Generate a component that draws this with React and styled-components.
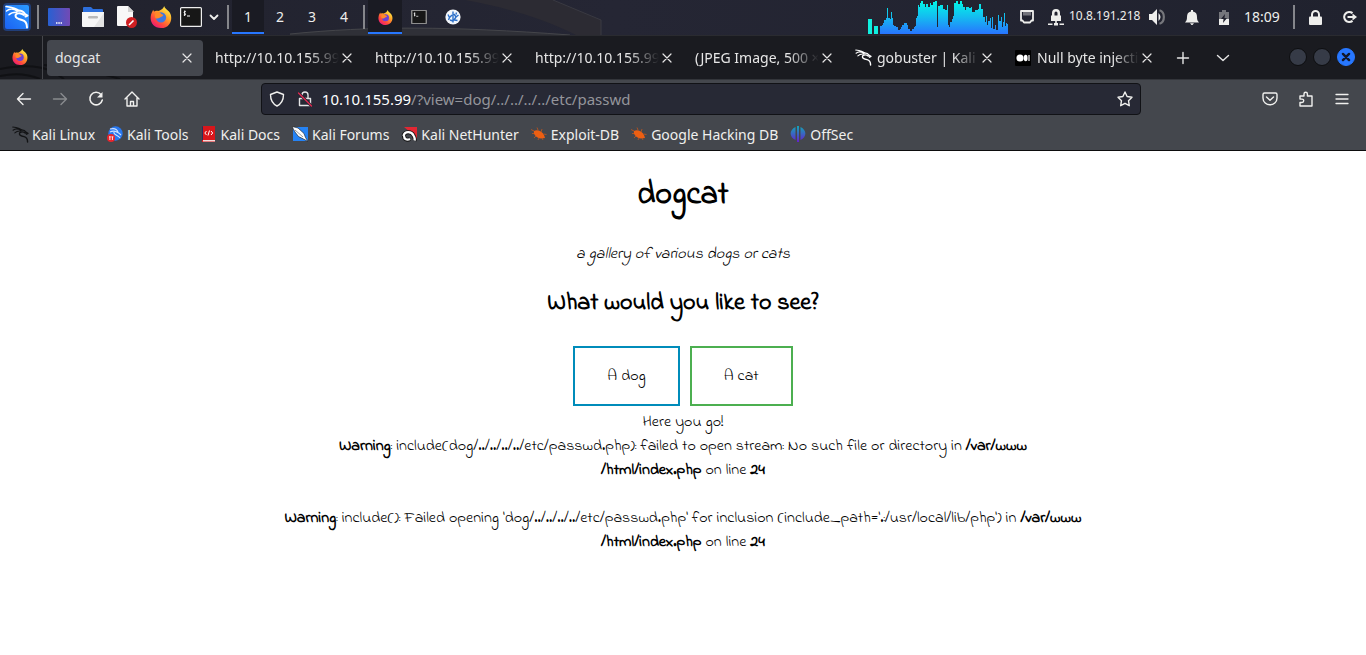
import React from "react";
import styled, { createGlobalStyle } from "styled-components";

const Global = createGlobalStyle`
  * { box-sizing: border-box; }
  body { margin: 0; background: #fff; font-family: "Noto Sans", sans-serif; }
  button { font: inherit; color: inherit; background: none; border: 0; padding: 0; margin: 0; }
  a { color: inherit; text-decoration: none; }
  svg { display: block; flex: none; }
`;

/* ---------- desktop panel ---------- */

const Panel = styled.header`
  position: relative;
  z-index: 0;
  display: flex;
  align-items: flex-start;
  height: 35px;
  background: linear-gradient(90deg, #21222d, #252634 45%, #20222e);
  color: #eeeeec;
  overflow: hidden;
`;
const Wallpaper = styled.svg`
  position: absolute;
  top: 0;
  left: 0;
  z-index: -1;
`;
const PanelButton = styled.button`
  flex: none;
  width: ${(p) => p.$w || 34}px;
  height: 34px;
  padding-top: 2px;
  display: flex;
  align-items: center;
  justify-content: center;
  font-size: 14px;
  line-height: 18px;
  background: ${(p) => (p.$active ? "#1a1b23" : "transparent")};
  border-bottom: 2px solid ${(p) => (p.$active ? "#2777ff" : "transparent")};
`;
const PanelRule = styled.span`
  flex: none;
  width: 2px;
  height: 24px;
  margin: 5px 3px 0;
  background: #85868b;
`;
const PanelSpace = styled.span`
  flex: 1;
`;
const Address = styled.span`
  width: 74px;
  padding-left: 2px;
  font-size: 12px;
  line-height: 32px;
  white-space: nowrap;
`;
const Clock = styled.time`
  width: 51px;
  padding-left: 5px;
  font-size: 14px;
  line-height: 33px;
`;

/* ---------- browser chrome ---------- */

const TabBar = styled.div`
  position: relative;
  z-index: 0;
  display: flex;
  align-items: center;
  height: 44px;
  background: #1a1b20;
  border-top: 1px solid #2a2b30;
  color: #e6e6e6;
  font-size: 14px;
`;
const BrowserMark = styled.span`
  flex: none;
  width: 43px;
  height: 43px;
  margin-right: 4px;
  padding: 0 0 2px 12px;
  display: flex;
  align-items: center;
  border-right: 1px solid #46474c;
`;
const Tabs = styled.div`
  display: flex;
  flex: 0 1 1116px;
  gap: 4px;
  min-width: 0;
`;
const Tab = styled.div`
  flex: 0 1 156px;
  min-width: 0;
  height: 36px;
  padding: 0 8px;
  display: flex;
  align-items: center;
  border-radius: 4px;
  background: ${(p) => (p.$active ? "#44474e" : "transparent")};
`;
const TabIcon = styled.span`
  flex: none;
  width: 22px;
`;
const TabLabel = styled.span`
  flex: 1;
  min-width: 0;
  overflow: hidden;
  white-space: nowrap;
  mask-image: ${(p) => (p.$fade ? "linear-gradient(90deg, #000 75%, transparent)" : "none")};
`;
const CloseTab = styled.button`
  flex: none;
  width: 16px;
  height: 16px;
  display: grid;
  place-items: center;
`;
const BarButton = styled.button`
  flex: none;
  width: 40px;
  height: 36px;
  display: grid;
  place-items: center;
`;
const WindowButtons = styled.div`
  display: flex;
  gap: 6px;
  margin-left: auto;
  padding: 0 11px 2px 0;
`;
const WindowButton = styled.button`
  width: 18px;
  height: 18px;
  border-radius: 50%;
  display: grid;
  place-items: center;
  border: 1px solid ${(p) => (p.$close ? "#2777ff" : "#0d0e10")};
  background: ${(p) => (p.$close ? "#2777ff" : "#363b47")};
`;
const Toolbar = styled.nav`
  background: #44474d;
  border-top: 1px solid #33353a;
  border-bottom: 1px solid #0c0c0d;
  color: #f0f0ee;
  font-size: 14px;
`;
const NavRow = styled.div`
  display: flex;
  align-items: center;
  height: 38px;
  padding: 0 6px;
`;
const NavButton = styled.button`
  flex: none;
  width: 36px;
  height: 32px;
  display: grid;
  place-items: center;
  opacity: ${(p) => (p.disabled ? 0.4 : 1)};
`;
const NavSpace = styled.span`
  flex: 10;
`;
const UrlBar = styled.form`
  flex: 78;
  min-width: 0;
  height: 32px;
  padding: 0 7px;
  display: flex;
  align-items: center;
  background: #272935;
  border: 1px solid #111216;
  border-radius: 4px;
  font-size: 15px;
  line-height: 20px;
`;
const UrlMarks = styled.span`
  flex: none;
  display: flex;
  gap: 12px;
  margin-right: 9px;
`;
const UrlHost = styled.label`
  color: #fff;
`;
const UrlPath = styled.input`
  flex: 1;
  min-width: 0;
  height: 20px;
  padding: 0;
  border: 0;
  outline: 0;
  background: none;
  color: #94959b;
  font: inherit;
`;
const Bookmarks = styled.div`
  display: flex;
  align-items: center;
  height: 32px;
  padding: 0 12px;
  gap: 12px;
`;
const Bookmark = styled.a`
  display: flex;
  align-items: center;
  gap: 4px;
  white-space: nowrap;
`;
const BookmarkIcon = styled.span`
  width: 16px;
  display: grid;
  place-items: center;
`;

/* ---------- page ---------- */

const Page = styled.main`
  padding: 21px 16px;
  color: #000;
  text-align: center;
  font-family: "Indie Flower", "Indie Flower Regular", cursive;
  font-size: 16px;
  line-height: 24px;
  font-kerning: none;
  font-variant-ligatures: none;
`;
const Title = styled.h1`
  margin: 0;
  font-size: 32px;
  line-height: 48px;
  font-weight: 700;
`;
const Tagline = styled.p`
  margin: 22px 0;
  font-style: italic;
`;
const Question = styled.h2`
  margin: 0;
  font-size: 24px;
  line-height: 32px;
  font-weight: 700;
`;
const Choices = styled.div`
  display: flex;
  justify-content: center;
  gap: 10px;
  margin: 26px 0 4px;
`;
const Choice = styled.a`
  padding: 16px 32px;
  border: 2px solid ${(p) => p.$color};
`;
const Message = styled.p`
  margin: 0 0 ${(p) => (p.$spaced ? 24 : 0)}px;
`;

/* ---------- drawings ---------- */

const Line = ({ d, size = 16, w = 1.4, color = "currentColor" }) => (
  <svg width={size} height={size} viewBox="0 0 16 16" fill="none" stroke={color} strokeWidth={w} strokeLinecap="round" strokeLinejoin="round">
    <path d={d} />
  </svg>
);

const DragonStrokes = () => (
  <>
    <path d="M1 1.500c5 .5 10 1 13 4.500M1.500 6c3-2.500 7-2.500 11 0M4 9.800c2-2 5-2.800 8-2.600" strokeWidth="1.500" />
    <path d="M13 5.500c3-.2 5.500 1 7 3.500l2.500 1.500-2 1" strokeWidth="2" />
    <path d="M19 10c-4-2.800-8.500-1.800-8.500.8s3 3.400 6.500 4.200 5 3 5 7.500" strokeWidth="2" />
  </>
);

const Dragon = ({ color = "#fff" }) => (
  <svg width="17" height="17" viewBox="0 0 24 24" fill="none" stroke={color} strokeLinecap="round" strokeLinejoin="round">
    <DragonStrokes />
  </svg>
);

const KaliMenu = () => (
  <svg width="30" height="30" viewBox="0 0 30 30">
    <defs>
      <linearGradient id="kali" x1="0" y1="1" x2="1" y2="0">
        <stop offset="0" stopColor="#1b62f4" />
        <stop offset="1" stopColor="#2b9bff" />
      </linearGradient>
    </defs>
    <rect x="1" y="1" width="28" height="28" rx="4" fill="#2468e8" opacity=".4" />
    <rect x="3" y="3" width="24" height="24" rx="2" fill="url(#kali)" />
    <g transform="translate(3 3)" fill="none" stroke="#fff" strokeLinecap="round" strokeLinejoin="round">
      <DragonStrokes />
    </g>
  </svg>
);

const Firefox = ({ size }) => (
  <svg width={size} height={size} viewBox="0 0 24 24">
    <defs>
      <linearGradient id="fox" x1=".85" y1=".1" x2=".2" y2="1">
        <stop offset="0" stopColor="#fff04a" />
        <stop offset=".35" stopColor="#ffa226" />
        <stop offset=".7" stopColor="#ff4a3c" />
        <stop offset="1" stopColor="#e9127f" />
      </linearGradient>
    </defs>
    <path d="M15.500 0c.5 3 4 4 6 7 3.500 5 2 17-9.500 17C4 24 0 18 .8 11.500 1.100 8 2.500 6 3.500 4c.2 1 .5 1.600 1 2 1.500-1 3-.8 4.500-.5 2-1 5-1.500 6.500-5.500z" fill="url(#fox)" />
    <circle cx="12" cy="12.500" r="5.600" fill={size > 20 ? "#3f78e0" : "#6a42d6"} />
    <path d="M6.500 7.500c2-1.500 4-1 5.500 1 1 .8 2.500.8 2.500 1.500-1 1.800-3 1.500-4 2.800C8.500 14 6 14 5.500 12 5 10.500 5.500 9 6.500 7.500z" fill="#ff8a28" />
  </svg>
);

const Desktop = () => (
  <svg width="22" height="18" viewBox="0 0 22 18">
    <defs>
      <linearGradient id="desk">
        <stop offset="0" stopColor="#2860d2" />
        <stop offset="1" stopColor="#724ab5" />
      </linearGradient>
    </defs>
    <rect width="22" height="18" rx="1" fill="url(#desk)" />
    <path d="M8 15h6" stroke="#fff" strokeWidth="1.500" strokeDasharray="1.500 .8" />
  </svg>
);

const Folder = () => (
  <svg width="22" height="20" viewBox="0 0 22 20">
    <path d="M1 1q0-1 1-1h7l2 2h9q1 0 1 1v4H1z" fill="#2d6fdc" />
    <path d="M0 5h22v14q0 1-1 1H1q-1 0-1-1z" fill="#f6f6f6" />
    <path d="M22 6v13q0 1-1 1h-9z" fill="#e4e4e4" />
    <rect x="6" y="9" width="10" height="2.500" rx="1.200" fill="#b9b9b9" />
  </svg>
);

const Editor = () => (
  <svg width="20" height="22" viewBox="0 0 20 22">
    <path d="M0 1q0-1 1-1h10l5 5v15H1q-1 0-1-1z" fill="#f8f8f8" />
    <path d="M11 0l6 6h-6z" fill="#d2d2d2" />
    <circle cx="14.500" cy="16.500" r="5.500" fill="#cf1f22" />
    <path d="M12 19l4.500-4.500" stroke="#fff" strokeWidth="1.600" />
  </svg>
);

const Terminal = ({ small }) => (
  <svg width={small ? 16 : 22} height={small ? 14 : 20} viewBox="0 0 22 20">
    <rect x=".6" y=".6" width="20.800" height="18.800" rx="1" fill="#171717" stroke={small ? "#8d8d8d" : "#eee"} strokeWidth={small ? 2 : 1.200} />
    <path d="M5.800 4.500C4 4 3.500 5.800 4.800 6.300s1 2.200-1 1.700M4.700 3.500v5.500M7 9h3" stroke="#fff" strokeWidth="1" fill="none" />
  </svg>
);

const Monitor = () => (
  <svg width="16" height="16" viewBox="0 0 16 16">
    <circle cx="8" cy="8" r="7.600" fill="#f2f6fb" />
    <path d="M3 5.500l1.500 3L7 6M4.500 8.500L3.500 11M8 2.500v11M9 5l2 3 2.500-2M11 8l-2 3 3.500.5M5 11l3 1M11.500 3.500l-.5 2" stroke="#2b6fc9" strokeWidth="1.400" fill="none" />
  </svg>
);

/* Each pair is a left edge and a bar top, on a scale of three units per pixel. */
const load = [
  [0,78],[6,76],[9,68],[12,60],[18,55],[21,24],[24,55],[30,58],[33,35],[36,55],[39,74],[42,78],[48,81],[54,90],[60,88],[63,80],[66,75],[72,70],[81,76],[84,86],[90,92],[96,88],[102,82],[106,77],[108,55],[111,48],[114,16],[117,20],[120,8],[123,4],[126,3],[129,12],[135,21],[138,13],[144,20],[150,10],[153,15],[159,6],[165,3],[171,81],[174,18],[180,15],[189,27],[195,30],[201,15],[204,75],[207,81],[210,66],[216,57],[219,48],[222,10],[228,3],[234,12],[240,3],[246,12],[249,22],[255,30],[258,22],[267,25],[273,20],[276,36],[285,30],[294,27],[297,12],[303,28],[309,50],[315,66],[318,48],[321,76],[324,64],[330,55],[333,84],[336,50],[339,88],[345,76],[348,90],[354,45],[357,63],[363,50],[366,82],[369,66],[372,39],[375,78],[378,69],[381,72],
];

const LoadGraph = () => (
  <svg width="142" height="34" viewBox="0 0 426 102">
    <defs>
      <linearGradient id="load" gradientUnits="userSpaceOnUse" x1="0" y1="0" x2="0" y2="102">
        <stop offset="0" stopColor="#00fae6" />
        <stop offset=".5" stopColor="#14bcf0" />
        <stop offset="1" stopColor="#2874ff" />
      </linearGradient>
    </defs>
    <path d="M0 57h12v45H0zM18 78h12v24H18z" fill="#0ff0df" />
    {load.map(([x, y], i) => {
      const end = i + 1 < load.length ? load[i + 1][0] : 384;
      return <rect key={x} x={36 + x} y={y} width={end - x} height={102 - y} fill="url(#load)" shapeRendering="crispEdges" />;
    })}
  </svg>
);

const Ethernet = () => (
  <svg width="14" height="14" viewBox="0 0 14 14" fill="none" stroke="#eeeeec">
    <path d="M1 1h12v9.500h-1.500l-1.500 2H4l-1.500-2H1z" strokeWidth="1.800" strokeLinejoin="round" />
    <path d="M4 2v3.500M6 2v3.500M8 2v3.500M10 2v3.500" strokeWidth="1" opacity=".8" />
  </svg>
);

const VpnLock = () => (
  <svg width="16" height="17" viewBox="0 0 16 17" fill="#eeeeec">
    <path fillRule="evenodd" d="M4 6.500V4a4 4 0 0 1 8 0v2.500h1V12H3V6.500zM6.500 6.500h3V4a1.500 1.500 0 0 0-3 0z" />
    <path d="M7.200 12h1.600v2H7.200zM0 14.500h4.500V16H0zM6 14h4v2.500H6zM11.500 14.500H16V16h-4.500z" />
  </svg>
);

const Volume = () => (
  <svg width="18" height="16" viewBox="0 0 18 16">
    <path d="M0 5h3l5-5v16l-5-5H0z" fill="#eeeeec" />
    <path d="M9.500 4q4 4 0 8z" fill="#eeeeec" />
    <path d="M10.500 1.200c5.800 1.500 5.800 12 0 13.600" stroke="#76777c" strokeWidth="2.200" fill="none" />
  </svg>
);

const Bell = () => (
  <svg width="14" height="15" viewBox="0 0 14 15" fill="#eeeeec">
    <path d="M6 0h2v1.500c3 .5 4 2.500 4 5.500 0 2.500.5 4 2 5.500H0C1.500 11 2 9.500 2 7c0-3 1-5 4-5.500zM5 13.200h4L7.500 15h-1z" />
  </svg>
);

const Battery = () => (
  <svg width="10" height="15" viewBox="0 0 10 15">
    <path d="M0 2h3V0h4v2h3v7H0z" fill="#75767b" />
    <path d="M0 9h10v6H0z" fill="#eeeeec" />
    <path d="M6 4L2 9h2.500L4 13l4-5H5.500z" fill="#22232e" />
  </svg>
);

const Padlock = () => (
  <svg width="13" height="15" viewBox="0 0 13 15">
    <path d="M3 8V4.500a3.500 3.500 0 0 1 7 0V8" fill="none" stroke="#eeeeec" strokeWidth="2" />
    <rect y="6.500" width="13" height="8.500" rx="1" fill="#eeeeec" />
  </svg>
);

const LogOut = () => (
  <svg width="15" height="14" viewBox="0 0 15 14" fill="none" stroke="#eeeeec">
    <path d="M10.500 3.200A5 5 0 1 0 10.500 10.800" strokeWidth="2.200" />
    <path d="M5.500 7H11" strokeWidth="2" />
    <path d="M10.500 3.500L15 7l-4.500 3.500z" fill="#eeeeec" stroke="none" />
  </svg>
);

const Medium = () => (
  <svg width="16" height="16" viewBox="0 0 16 16">
    <rect width="16" height="16" rx="1" fill="#000" />
    <circle cx="5" cy="8" r="3.600" fill="#fff" />
    <ellipse cx="10.700" cy="8" rx="1.900" ry="3.300" fill="#fff" />
    <path d="M14 5v6" stroke="#fff" strokeWidth="1.200" />
  </svg>
);

const Close = () => <Line d="M4 4l8 8M12 4l-8 8" w={1.2} />;

const Reload = () => (
  <svg width="16" height="16" viewBox="0 0 16 16" fill="none" stroke="currentColor" strokeWidth="1.500">
    <path d="M13 3.500A6.300 6.300 0 1 0 14.300 9" strokeLinecap="round" />
    <path d="M14.500 1v5.500H9z" fill="currentColor" stroke="none" />
  </svg>
);

const Insecure = () => (
  <svg width="16" height="16" viewBox="0 0 16 16" fill="none" strokeLinecap="round">
    <path d="M5 7V4a3 3 0 0 1 6 0v3M2.500 7.500h11v7h-11z" stroke="#e4e4e6" strokeWidth="1.400" strokeLinejoin="round" />
    <path d="M2 2.500l12.500 12.500" stroke="#272935" strokeWidth="3" />
    <path d="M1.500 2l13 13" stroke="#e22850" strokeWidth="1.300" />
  </svg>
);

const KaliTools = () => (
  <svg width="16" height="16" viewBox="0 0 16 16">
    <circle cx="8.500" cy="7.500" r="7.200" fill="#2777f0" />
    <path d="M3 3c4-1 7 0 8 3M3 6c4-2 8 0 11 3M7 6c-1 3 4 3 6 6" stroke="#cfe2ff" strokeWidth="1.100" fill="none" />
    <circle cx="4" cy="12" r="4" fill="#e8252c" />
    <path d="M2 10.800h1.800M2.900 11v3M4.500 10.800h1.800M5.400 11v3" stroke="#fff" strokeWidth=".9" />
  </svg>
);

const KaliDocs = () => (
  <svg width="13" height="16" viewBox="0 0 13 16">
    <path d="M0 1q0-1 1-1h12v16H0z" fill="#d8161b" />
    <path d="M0 1q0-1 1-1v14H0z" fill="#25305e" />
    <path d="M1 14h12v1.500H1z" fill="#f3dada" />
    <path d="M4.500 5L2.800 7l1.700 2M9 5l1.700 2L9 9M7.500 4.500l-1.500 5" stroke="#fff" strokeWidth="1" fill="none" />
  </svg>
);

const KaliForums = () => (
  <svg width="16" height="16" viewBox="0 0 16 16">
    <path d="M1 1h15v14H1z" fill="#2583f5" />
    <path d="M0 .5l6 1.500 6 5.500 1.500 4L16 15.500l-4.500-2.500-5-2.500L3 6z" fill="#fff" stroke="#161719" strokeWidth=".6" />
    <path d="M3 4l8 7" stroke="#333" strokeWidth=".5" />
  </svg>
);

const NetHunter = () => (
  <svg width="16" height="15" viewBox="0 0 16 15">
    <path d="M3 0h13v12L9 5z" fill="#e22733" />
    <path d="M2.500 9c1-5 8-5 10-.5 1.500 2.500 1.500 4 1 5M3 8.500c0 4 3 5 6 3.500" fill="none" stroke="#111" strokeWidth="4" />
    <path d="M2.500 9c1-5 8-5 10-.5 1.500 2.500 1.500 4 1 5M3 8.500c0 4 3 5 6 3.500" fill="none" stroke="#fff" strokeWidth="2.300" />
  </svg>
);

const Bug = () => (
  <svg width="16" height="14" viewBox="0 0 16 14">
    <path d="M3 4c3-2 8 0 10 4l1 3-4 .5C6 11 2 8 3 4z" fill="#ed5f12" />
    <path d="M3 4L0 2.500M3 6.500H1M5 9l-2 2M8 11l-1 2M7 3L6 .5M10 5l1-3M12.500 7l3 .5M11 11l1 2" stroke="#b9541f" strokeWidth=".9" />
  </svg>
);

const OffSec = () => (
  <svg width="16" height="16" viewBox="0 0 16 16">
    <defs>
      <linearGradient id="offsec" x1="0" y1="0" x2="0" y2="1">
        <stop offset="0" stopColor="#12a7b8" />
        <stop offset="1" stopColor="#6520ce" />
      </linearGradient>
    </defs>
    <path d="M5.500 1v13C-1 11-1 4 5.500 1zM7 0h2v16H7zM10.500 1c6.500 3 6.500 10 0 13z" fill="url(#offsec)" />
  </svg>
);

/* ---------- data ---------- */

const tabs = [
  { title: "dogcat", active: true },
  { title: "http://10.10.155.99/" },
  { title: "http://10.10.155.99/" },
  { title: "http://10.10.155.99/" },
  { title: "(JPEG Image, 500 ×" },
  { title: "gobuster | Kali L", icon: <Dragon /> },
  { title: "Null byte injectio", icon: <Medium /> },
];

const bookmarks = [
  ["Kali Linux", <Dragon color="#121315" />],
  ["Kali Tools", <KaliTools />],
  ["Kali Docs", <KaliDocs />],
  ["Kali Forums", <KaliForums />],
  ["Kali NetHunter", <NetHunter />],
  ["Exploit-DB", <Bug />],
  ["Google Hacking DB", <Bug />],
  ["OffSec", <OffSec />],
];

const Warning = ({ children, spaced }) => (
  <Message $spaced={spaced}>
    <b>Warning</b>: {children} in <b>/var/www<br />/html/index.php</b> on line <b>24</b>
  </Message>
);

export default function App() {
  return (
    <>
      <Global />
      <Panel>
        <Wallpaper width="640" height="35" viewBox="0 0 640 35" aria-hidden="true">
          <path d="M465 0h88l48 20v15h-25C545 20 510 8 465 0z" fill="#2c2b33" />
          <path d="M553 0l48 20v15" fill="none" stroke="#3a3a42" />
          <path d="M290 34C370 26 450 26 570 35H290z" fill="#2f3037" />
          <path d="M290 34C370 26 450 26 570 35" fill="none" stroke="#44454a" />
        </Wallpaper>
        <PanelButton aria-label="Applications"><KaliMenu /></PanelButton>
        <PanelRule />
        <PanelButton aria-label="Show desktop"><Desktop /></PanelButton>
        <PanelButton aria-label="Files"><Folder /></PanelButton>
        <PanelButton aria-label="Text editor"><Editor /></PanelButton>
        <PanelButton aria-label="Firefox"><Firefox size={22} /></PanelButton>
        <PanelButton $w={26} aria-label="Terminal"><Terminal /></PanelButton>
        <PanelButton $w={20} aria-label="More terminals"><Line d="M4.500 6.500L8 10l3.500-3.500" w={1.8} /></PanelButton>
        <PanelRule />
        {[1, 2, 3, 4].map((n) => (
          <PanelButton key={n} $w={32} $active={n === 1}>{n}</PanelButton>
        ))}
        <PanelRule />
        <PanelButton $active aria-label="Firefox window"><Firefox size={15} /></PanelButton>
        <PanelButton aria-label="Terminal window"><Terminal small /></PanelButton>
        <PanelButton aria-label="Monitor window"><Monitor /></PanelButton>
        <PanelSpace />
        <LoadGraph />
        <PanelButton aria-label="Network"><Ethernet /></PanelButton>
        <PanelButton $w={23} aria-label="VPN"><VpnLock /></PanelButton>
        <Address>10.8.191.218</Address>
        <PanelButton aria-label="Volume"><Volume /></PanelButton>
        <PanelButton aria-label="Notifications"><Bell /></PanelButton>
        <PanelButton $w={30} aria-label="Battery"><Battery /></PanelButton>
        <Clock>18:09</Clock>
        <PanelRule />
        <PanelButton aria-label="Lock screen"><Padlock /></PanelButton>
        <PanelButton aria-label="Log out"><LogOut /></PanelButton>
      </Panel>

      <TabBar>
        <Wallpaper width="180" height="43" viewBox="0 0 180 43" aria-hidden="true">
          <path d="M0 33c20-4 38-4 52 2l12 8M0 40c14-3 26-3 40 3M44 29c24 2 50 6 76 14" fill="none" stroke="#101114" strokeWidth="2" />
        </Wallpaper>
        <BrowserMark><Firefox size={16} /></BrowserMark>
        <Tabs>
          {tabs.map((t, i) => (
            <Tab key={i} $active={t.active}>
              {t.icon && <TabIcon>{t.icon}</TabIcon>}
              <TabLabel $fade={!t.active}>{t.title}</TabLabel>
              <CloseTab aria-label="Close tab"><Close /></CloseTab>
            </Tab>
          ))}
        </Tabs>
        <BarButton aria-label="New tab"><Line d="M2.500 8h11M8 2.500v11" /></BarButton>
        <BarButton aria-label="List all tabs"><Line d="M2.500 5.500L8 10.500l5.500-5" /></BarButton>
        <WindowButtons>
          <WindowButton aria-label="Minimize" />
          <WindowButton aria-label="Maximize" />
          <WindowButton $close aria-label="Close"><Line d="M4.500 4.500l7 7M11.500 4.500l-7 7" w={2.8} size={14} color="#12182a" /></WindowButton>
        </WindowButtons>
      </TabBar>

      <Toolbar>
        <NavRow>
          <NavButton aria-label="Back"><Line d="M14.500 8H1.500M7 2.500L1.500 8 7 13.500" /></NavButton>
          <NavButton aria-label="Forward" disabled><Line d="M1.500 8h13M9 2.500L14.500 8 9 13.500" /></NavButton>
          <NavButton aria-label="Reload"><Reload /></NavButton>
          <NavButton aria-label="Home"><Line d="M1 8l7-7 7 7M3 7v8h10V7M6.500 15v-4.500h3V15" /></NavButton>
          <NavSpace />
          <UrlBar>
            <UrlMarks>
              <Line d="M8 1l6.500 2.500c0 5-1.500 9-6.500 11.500C3 12.500 1.500 8.500 1.500 3.500z" />
              <Insecure />
            </UrlMarks>
            <UrlHost htmlFor="url">10.10.155.99</UrlHost>
            <UrlPath id="url" defaultValue="/?view=dog/../../../../etc/passwd" />
            <button type="button" aria-label="Bookmark this page">
              <Line d="M8 1l2.100 4.500 4.900.7-3.500 3.500.8 5L8 12.300l-4.300 2.400.8-5L1 6.200l4.900-.7z" />
            </button>
          </UrlBar>
          <NavSpace />
          <NavButton aria-label="Pocket"><Line d="M2.500 2h11q1.500 0 1.500 1.500V7c0 9-14 9-14 0V3.500Q1 2 2.500 2zM4.500 6L8 9.300 11.500 6" /></NavButton>
          <NavButton aria-label="Extensions"><Line d="M2 5h4V3a1.700 1.700 0 0 1 3.400 0v2H14v10H2v-3.500h2a1.700 1.700 0 0 0 0-3.400H2z" /></NavButton>
          <NavButton aria-label="Menu"><Line d="M2 3.500h12M2 8h12M2 12.500h12" w={1.3} /></NavButton>
        </NavRow>
        <Bookmarks>
          {bookmarks.map(([name, icon]) => (
            <Bookmark key={name} href="#"><BookmarkIcon>{icon}</BookmarkIcon>{name}</Bookmark>
          ))}
        </Bookmarks>
      </Toolbar>

      <Page>
        <Title>dogcat</Title>
        <Tagline>a gallery of various dogs or cats</Tagline>
        <Question>What would you like to see?</Question>
        <Choices>
          <Choice href="#dog" $color="#008cba">A dog</Choice>
          <Choice href="#cat" $color="#4caf50">A cat</Choice>
        </Choices>
        <Message>Here you go!</Message>
        <Warning spaced>include(dog/../../../../etc/passwd.php): failed to open stream: No such file or directory</Warning>
        <Warning>include(): Failed opening 'dog/../../../../etc/passwd.php' for inclusion (include_path='.:/usr/local/lib/php')</Warning>
      </Page>
    </>
  );
}
